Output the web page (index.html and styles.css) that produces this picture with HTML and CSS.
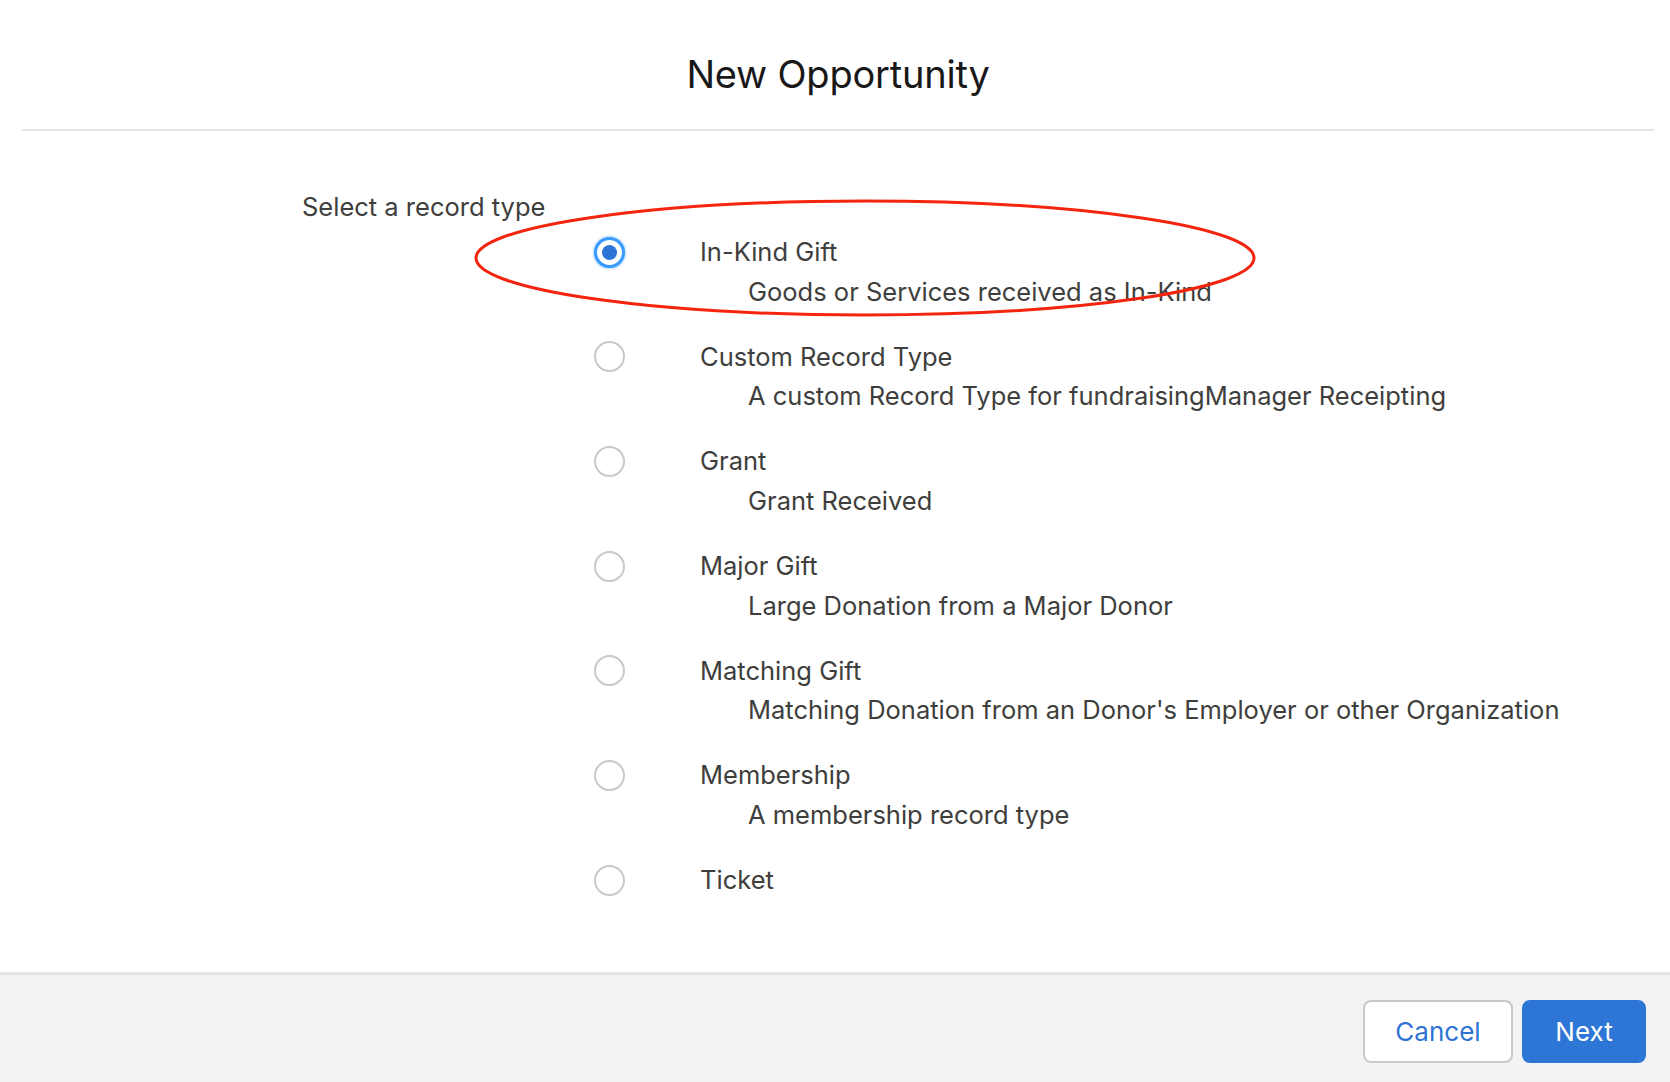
FILE: index.html
```html
<!DOCTYPE html>
<html lang="en">
<head>
    <meta charset="UTF-8">
    <meta name="viewport" content="width=device-width, initial-scale=1.0">
    <title>New Opportunity</title>
    <link rel="stylesheet" href="styles.css">
</head>
<body>
    <div class="modal">
        <div class="modal-header">
            <h1>New Opportunity</h1>
        </div>
        <div class="modal-body">
            <div class="select-label">Select a record type</div>
            <div class="options">
                <label class="option">
                    <span class="radio checked"></span>
                    <span class="option-text">
                        <span class="option-name">In-Kind Gift</span>
                        <span class="option-desc">Goods or Services received as In-Kind</span>
                    </span>
                </label>
                <label class="option">
                    <span class="radio"></span>
                    <span class="option-text">
                        <span class="option-name">Custom Record Type</span>
                        <span class="option-desc">A custom Record Type for fundraisingManager Receipting</span>
                    </span>
                </label>
                <label class="option">
                    <span class="radio"></span>
                    <span class="option-text">
                        <span class="option-name">Grant</span>
                        <span class="option-desc">Grant Received</span>
                    </span>
                </label>
                <label class="option">
                    <span class="radio"></span>
                    <span class="option-text">
                        <span class="option-name">Major Gift</span>
                        <span class="option-desc">Large Donation from a Major Donor</span>
                    </span>
                </label>
                <label class="option">
                    <span class="radio"></span>
                    <span class="option-text">
                        <span class="option-name">Matching Gift</span>
                        <span class="option-desc">Matching Donation from an Donor's Employer or other Organization</span>
                    </span>
                </label>
                <label class="option">
                    <span class="radio"></span>
                    <span class="option-text">
                        <span class="option-name">Membership</span>
                        <span class="option-desc">A membership record type</span>
                    </span>
                </label>
                <label class="option">
                    <span class="radio"></span>
                    <span class="option-text">
                        <span class="option-name">Ticket</span>
                    </span>
                </label>
            </div>
        </div>
        <div class="modal-footer">
            <button class="btn btn-neutral">Cancel</button>
            <button class="btn btn-brand">Next</button>
        </div>

        <!-- red annotation around the selected option -->
        <svg class="annotation" width="790" height="124" viewBox="0 0 790 124">
            <ellipse cx="395" cy="62" rx="389" ry="57" fill="none" stroke="#f4250f" stroke-width="3"/>
        </svg>
    </div>
</body>
</html>
```

FILE: styles.css
```css
body {
    margin: 0;
    background-color: #fff;
    font-family: Inter, "Open Sans", Arial, sans-serif;
    color: #3e3e3c;
}
.modal {
    position: relative;
    height: 1082px;
    display: flex;
    flex-direction: column;
}
.modal-header {
    margin: 0 16px 0 22px;
    padding: 50px 0 31px;
    border-bottom: 2px solid #e5e5e5;
    text-align: center;
}
.modal-header h1 {
    margin: 0;
    font-size: 38px;
    line-height: 48px;
    font-weight: 400;
    color: #181818;
    letter-spacing: -0.2px;
}
.modal-body {
    flex: 1;
    padding: 57px 0 0 302px;
}
.select-label {
    font-size: 25.5px;
    line-height: 38px;
}
.options {
    display: flex;
    flex-direction: column;
    gap: 26.2px;
    margin-top: 7px;
    padding-left: 292px;
}
.option {
    display: flex;
    align-items: flex-start;
    gap: 75px;
    cursor: pointer;
}
.radio {
    box-sizing: border-box;
    flex: none;
    width: 31px;
    height: 31px;
    margin-top: 3.5px;
    border: 2px solid #c9c9c9;
    border-radius: 50%;
    background-color: #fff;
}
.radio.checked {
    border: 3px solid #3a9bff;
    box-shadow: 0 0 3px rgba(27, 150, 255, 0.7);
    display: flex;
    align-items: center;
    justify-content: center;
}
.radio.checked::after {
    content: "";
    width: 15px;
    height: 15px;
    border-radius: 50%;
    background-color: #2e74d6;
}
.option-text {
    display: flex;
    flex-direction: column;
    font-size: 25.5px;
    line-height: 38px;
}
.option-desc {
    padding-left: 48px;
    line-height: 40px;
    margin-top: 0.5px;
}
.modal-footer {
    height: 110px;
    box-sizing: border-box;
    border-top: 3px solid #e5e5e5;
    background-color: #f3f3f3;
    display: flex;
    justify-content: flex-end;
    align-items: flex-start;
    gap: 9px;
    padding: 25px 24px 0 0;
}
.btn {
    box-sizing: border-box;
    height: 63px;
    border-radius: 8px;
    font-family: inherit;
    font-size: 26px;
    cursor: pointer;
}
.btn-neutral {
    width: 150px;
    background-color: #fff;
    border: 2px solid #c9c9c9;
    color: #2e74d6;
}
.btn-brand {
    width: 124px;
    background-color: #2e76d6;
    border: 2px solid #2e76d6;
    color: #fff;
}
.annotation {
    position: absolute;
    left: 470px;
    top: 196px;
    pointer-events: none;
}
```
